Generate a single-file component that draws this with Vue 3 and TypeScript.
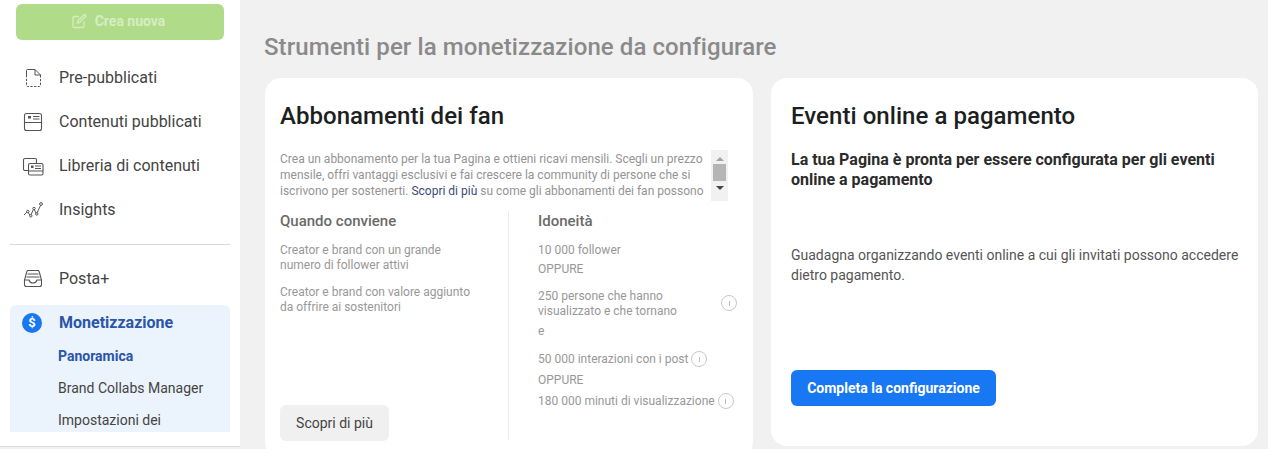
<script setup lang="ts">
interface NavItem { label: string; icon: string }
const topItems: NavItem[] = [
  { label: 'Pre-pubblicati', icon: 'draft' },
  { label: 'Contenuti pubblicati', icon: 'post' },
  { label: 'Libreria di contenuti', icon: 'library' },
  { label: 'Insights', icon: 'insights' },
]
</script>

<template>
  <div class="page">
    <aside class="sidebar">
      <button class="create">
        <svg width="16" height="16" viewBox="0 0 16 16" fill="none" stroke="#d4ecbd" stroke-width="1.4">
          <path d="M13 8.500V13a1.500 1.500 0 0 1-1.500 1.500h-8A1.500 1.500 0 0 1 2 13V5a1.500 1.500 0 0 1 1.500-1.500H8" />
          <path d="M6.500 10l.6-2.400L13.400 1.300l1.600 1.600-6.300 6.400z" />
        </svg>
        <span>Crea nuova</span>
      </button>
      <nav class="nav">
        <a v-for="item in topItems" :key="item.label" class="nav-item">
          <span class="icon">
            <svg v-if="item.icon === 'draft'" width="20" height="20" viewBox="0 0 20 20" fill="none" stroke="#555" stroke-width="1">
              <path d="M4.500 8V3.500a1 1 0 0 1 1-1H13l5.500 5.500v2" />
              <path d="M4.500 8v10.500a1 1 0 0 0 1 1h12a1 1 0 0 0 1-1V10" stroke-dasharray="2.300 1.400" />
              <path d="M13 2.500V8h5.500" />
            </svg>
            <svg v-else-if="item.icon === 'post'" width="20" height="20" viewBox="0 0 20 20" fill="none" stroke="#555" stroke-width="1.100">
              <rect x="2.500" y="2.500" width="17" height="17" rx="2" />
              <path d="M2.500 11.500h17M11 5.500h6.500M11 8h6.500" />
              <rect x="6" y="5" width="3" height="2.500" fill="#555" stroke="none" />
            </svg>
            <svg v-else-if="item.icon === 'library'" width="20" height="20" viewBox="0 0 20 20" fill="none" stroke="#555" stroke-width="1.100">
              <path d="M6 15.500H3a1.500 1.500 0 0 1-1.500-1.500L1.500 5A1.500 1.500 0 0 1 3 3.500h10A1.500 1.500 0 0 1 14.500 5v3" />
              <rect x="6.500" y="8.500" width="14.500" height="11.500" rx="1.500" />
              <path d="M6.500 16h14.500M13 11h6M13 13.500h6" />
              <rect x="9" y="10.500" width="2.500" height="2.500" fill="#555" stroke="none" />
            </svg>
            <svg v-else width="20" height="20" viewBox="0 0 20 20" fill="none" stroke="#555" stroke-width="1">
              <path d="M2 16l3.500-3.500 3 4.500 3.300-7.500 2.700 5.500 4.500-9.500" />
              <circle cx="5.800" cy="12.500" r="1.200" fill="#fff" />
              <circle cx="8.800" cy="16.800" r="1.200" fill="#fff" />
              <circle cx="12" cy="9.500" r="1.200" fill="#fff" />
              <circle cx="14.800" cy="15" r="1.200" fill="#fff" />
              <circle cx="19" cy="5" r="1.400" fill="#fff" />
            </svg>
          </span>
          <span>{{ item.label }}</span>
        </a>
      </nav>
      <div class="divider"></div>
      <a class="nav-item single">
        <span class="icon">
          <svg width="20" height="20" viewBox="0 0 20 20" fill="none" stroke="#555" stroke-width="1.100">
            <g transform="translate(1 0.500)">
              <path d="M4.500 2h11l.8 1.500L18.500 11.500V16a2 2 0 0 1-2 2h-13a2 2 0 0 1-2-2v-4.500L3.700 3.500z" />
              <path d="M1.500 11.500h4.500c.5 2 2 3 4 3s3.500-1 4-3h4.500M4.500 5.500h11M3.500 8.500h13" />
            </g>
          </svg>
        </span>
        <span>Posta+</span>
      </a>
      <section class="monet">
        <div class="monet-head">
          <span class="icon">
            <span class="dollar">$</span>
          </span>
          <span>Monetizzazione</span>
        </div>
        <a class="sub active">Panoramica</a>
        <a class="sub">Brand Collabs Manager</a>
        <a class="sub">Impostazioni dei</a>
      </section>
    </aside>

    <main class="main">
      <h1 class="title">Strumenti per la monetizzazione da configurare</h1>
      <div class="cards">
        <article class="card fan">
          <h2>Abbonamenti dei fan</h2>
          <div class="scrollbox">
            <p class="intro">
              Crea un abbonamento per la tua Pagina e ottieni ricavi mensili. Scegli un prezzo
              mensile, offri vantaggi esclusivi e fai crescere la community di persone che si
              iscrivono per sostenerti. <a>Scopri di più</a> su come gli abbonamenti dei fan possono
            </p>
            <div class="scrollbar">
              <span class="arrow up"></span>
              <span class="thumb"></span>
              <span class="arrow down"></span>
            </div>
          </div>
          <div class="cols">
            <div class="col left">
              <h3>Quando conviene</h3>
              <p>Creator e brand con un grande<br />numero di follower attivi</p>
              <p class="second">Creator e brand con valore aggiunto<br />da offrire ai sostenitori</p>
              <button class="learn">Scopri di più</button>
            </div>
            <div class="col right">
              <h3>Idoneità</h3>
              <p>10 000 follower</p>
              <p class="or">OPPURE</p>
              <div class="with-info wide">
                <p>250 persone che hanno<br />visualizzato e che tornano</p>
                <i class="info"></i>
              </div>
              <p class="e">e</p>
              <div class="with-info l1">
                <p>50 000 interazioni con i post</p>
                <i class="info"></i>
              </div>
              <p class="or o2">OPPURE</p>
              <div class="with-info l2">
                <p>180 000 minuti di visualizzazione</p>
                <i class="info"></i>
              </div>
            </div>
          </div>
        </article>

        <article class="card events">
          <h2>Eventi online a pagamento</h2>
          <h4>La tua Pagina è pronta per essere configurata per gli eventi<br />online a pagamento</h4>
          <p class="desc">Guadagna organizzando eventi online a cui gli invitati possono accedere dietro pagamento.</p>
          <button class="primary">Completa la configurazione</button>
        </article>
      </div>
    </main>
  </div>
</template>

<style>
html, body { margin: 0; background: #f1f1f1; overflow: hidden; }
</style>

<style scoped>
.page {
  width: 1268px;
  height: 449px;
  display: flex;
  overflow: hidden;
  font-family: Roboto, "Liberation Sans", sans-serif;
  background: #f1f1f1;
}
.sidebar {
  width: 240px;
  height: 447px;
  flex: none;
  box-sizing: border-box;
  background: #fff;
  padding: 4px 10px 0;
  border-bottom: 1px solid #dcdcdc;
}
.create {
  width: 208px;
  height: 36px;
  margin: 0 6px;
  padding: 0 4px 2px 0;
  border: 0;
  border-radius: 6px;
  background: #b0dc8a;
  color: #d6edc1;
  font: 700 14px Roboto, sans-serif;
  display: flex;
  align-items: center;
  justify-content: center;
  gap: 8px;
}
.nav { margin-top: 15px; }
.nav-item {
  height: 44px;
  display: flex;
  align-items: center;
  font-size: 16px;
  color: #444;
}
.icon {
  width: 20px;
  height: 20px;
  margin: 0 17px 0 12px;
  display: flex;
  align-items: center;
  justify-content: center;
  flex: none;
}
.icon svg { overflow: visible; }
.divider { height: 1px; background: #d8d8d8; margin-top: 13px; }
.single { margin-top: 11px; }
.monet {
  height: 127px;
  margin-top: 5px;
  background: #ebf3fc;
  border-radius: 6px 6px 0 0;
  overflow: hidden;
}
.monet-head {
  height: 35px;
  display: flex;
  align-items: center;
  font-size: 16px;
  font-weight: 700;
  color: #2a55a8;
}
.dollar {
  width: 20px;
  height: 20px;
  border-radius: 50%;
  background: #1877f2;
  color: #fff;
  font-size: 13px;
  font-weight: 700;
  line-height: 20px;
  text-align: center;
}
.sub {
  display: block;
  height: 32px;
  line-height: 32px;
  padding-left: 48px;
  font-size: 14px;
  color: #444;
}
.sub.active { font-weight: 700; color: #2a55a8; }

.main { flex: 1; padding: 34px 10px 0 24px; min-width: 0; }
.title {
  margin: 0;
  font-size: 24px;
  line-height: 26px;
  font-weight: 500;
  letter-spacing: 0.08px;
  color: #8a8a8a;
}
.cards { display: flex; gap: 18px; margin-top: 18px; margin-left: 1px; }
.card {
  height: 368px;
  box-sizing: border-box;
  background: #fff;
  border-radius: 16px;
  padding: 24px 15px 0;
  flex: none;
}
.fan { width: 488px; height: 380px; }
.events { width: 487px; padding: 24px 20px 0; }
h2 {
  margin: 0;
  font-size: 24px;
  line-height: 28px;
  font-weight: 500;
  letter-spacing: 0.05px;
  color: #1c1e21;
}
.scrollbox {
  display: flex;
  justify-content: space-between;
  margin-top: 20px;
  height: 51px;
}
.intro {
  margin: 1px 0 0;
  font-size: 12px;
  line-height: 16px;
  color: #949494;
  width: 426px;
  white-space: normal;
}
.intro a { color: #3b4a7a; }
.scrollbar {
  width: 17px;
  height: 51px;
  margin-right: 10px;
  background: #f1f1f1;
  display: flex;
  flex-direction: column;
  align-items: center;
  position: relative;
}
.thumb { width: 13px; height: 17px; background: #b5b5b5; margin-top: 3px; }
.arrow { width: 0; height: 0; border-left: 4px solid transparent; border-right: 4px solid transparent; }
.arrow.up { border-bottom: 4px solid #a3a3a3; margin-top: 7px; }
.arrow.down { border-top: 4px solid #444; margin-top: 5px; }
.cols { display: flex; margin-top: 10px; }
.col h3 {
  margin: 0 0 12px;
  font-size: 15px;
  line-height: 20px;
  font-weight: 500;
  color: #6a6a6a;
}
.col p {
  margin: 0;
  font-size: 12px;
  line-height: 15px;
  color: #989898;
}
.left { width: 228px; height: 229px; position: relative; border-right: 1px solid #ececec; flex: none; }
.left .second { margin-top: 12px; }
.right { padding-left: 29px; }
.or { margin-top: 4px !important; }
.with-info { display: flex; align-items: center; }
.wide { margin-top: 12px; width: 200px; justify-content: space-between; }
.wide .info { margin-top: -2px; margin-right: 1px; }
.e { margin-top: 5px !important; }
.l1 { margin-top: 12px; gap: 3px; }
.o2 { margin-top: 6px !important; }
.l2 { margin-top: 5px; gap: 3px; }
.info {
  width: 16px;
  height: 16px;
  box-sizing: border-box;
  border: 1px solid #c8c8c8;
  border-radius: 50%;
  display: inline-block;
  position: relative;
  flex: none;
}
.info::after {
  content: "";
  position: absolute;
  left: 6.500px;
  top: 5px;
  width: 1px;
  height: 5px;
  background: #bbb;
}
.learn {
  position: absolute;
  left: 0;
  top: 194px;
  width: 109px;
  height: 36px;
  border: 0;
  border-radius: 6px;
  background: #f0f0f0;
  color: #444;
  font: 400 14px Roboto, sans-serif;
}
h4 {
  margin: 20px 0 0;
  font-size: 16px;
  line-height: 20px;
  font-weight: 700;
  color: #2b2b2b;
}
.desc {
  margin: 55px 0 0;
  width: 452px;
  font-size: 14px;
  line-height: 20px;
  color: #555;
}
.primary {
  margin-top: 85px;
  width: 205px;
  height: 36px;
  border: 0;
  border-radius: 6px;
  background: #1877f2;
  color: #fff;
  font: 700 14px Roboto, sans-serif;
}
</style>
